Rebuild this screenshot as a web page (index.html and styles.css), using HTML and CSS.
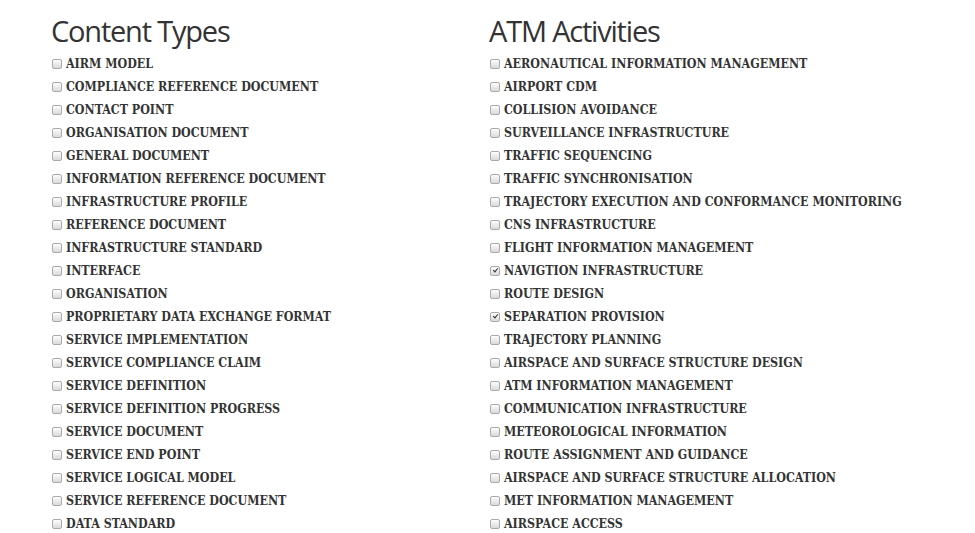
FILE: index.html
```html
<!DOCTYPE html>
<html>
<head>
<meta charset="utf-8">
<link rel="stylesheet" href="styles.css">
</head>
<body>
<div class="page">
  <section class="col">
    <h2 class="title">Content Types</h2>
    <ul class="list">
      <li><span class="cb"></span>AIRM MODEL</li>
      <li><span class="cb"></span>COMPLIANCE REFERENCE DOCUMENT</li>
      <li><span class="cb"></span>CONTACT POINT</li>
      <li><span class="cb"></span>ORGANISATION DOCUMENT</li>
      <li><span class="cb"></span>GENERAL DOCUMENT</li>
      <li><span class="cb"></span>INFORMATION REFERENCE DOCUMENT</li>
      <li><span class="cb"></span>INFRASTRUCTURE PROFILE</li>
      <li><span class="cb"></span>REFERENCE DOCUMENT</li>
      <li><span class="cb"></span>INFRASTRUCTURE STANDARD</li>
      <li><span class="cb"></span>INTERFACE</li>
      <li><span class="cb"></span>ORGANISATION</li>
      <li><span class="cb"></span>PROPRIETARY DATA EXCHANGE FORMAT</li>
      <li><span class="cb"></span>SERVICE IMPLEMENTATION</li>
      <li><span class="cb"></span>SERVICE COMPLIANCE CLAIM</li>
      <li><span class="cb"></span>SERVICE DEFINITION</li>
      <li><span class="cb"></span>SERVICE DEFINITION PROGRESS</li>
      <li><span class="cb"></span>SERVICE DOCUMENT</li>
      <li><span class="cb"></span>SERVICE END POINT</li>
      <li><span class="cb"></span>SERVICE LOGICAL MODEL</li>
      <li><span class="cb"></span>SERVICE REFERENCE DOCUMENT</li>
      <li><span class="cb"></span>DATA STANDARD</li>
    </ul>
  </section>
  <section class="col">
    <h2 class="title">ATM Activities</h2>
    <ul class="list">
      <li><span class="cb"></span>AERONAUTICAL INFORMATION MANAGEMENT</li>
      <li><span class="cb"></span>AIRPORT CDM</li>
      <li><span class="cb"></span>COLLISION AVOIDANCE</li>
      <li><span class="cb"></span>SURVEILLANCE INFRASTRUCTURE</li>
      <li><span class="cb"></span>TRAFFIC SEQUENCING</li>
      <li><span class="cb"></span>TRAFFIC SYNCHRONISATION</li>
      <li><span class="cb"></span>TRAJECTORY EXECUTION AND CONFORMANCE MONITORING</li>
      <li><span class="cb"></span>CNS INFRASTRUCTURE</li>
      <li><span class="cb"></span>FLIGHT INFORMATION MANAGEMENT</li>
      <li><span class="cb checked"></span>NAVIGTION INFRASTRUCTURE</li>
      <li><span class="cb"></span>ROUTE DESIGN</li>
      <li><span class="cb checked"></span>SEPARATION PROVISION</li>
      <li><span class="cb"></span>TRAJECTORY PLANNING</li>
      <li><span class="cb"></span>AIRSPACE AND SURFACE STRUCTURE DESIGN</li>
      <li><span class="cb"></span>ATM INFORMATION MANAGEMENT</li>
      <li><span class="cb"></span>COMMUNICATION INFRASTRUCTURE</li>
      <li><span class="cb"></span>METEOROLOGICAL INFORMATION</li>
      <li><span class="cb"></span>ROUTE ASSIGNMENT AND GUIDANCE</li>
      <li><span class="cb"></span>AIRSPACE AND SURFACE STRUCTURE ALLOCATION</li>
      <li><span class="cb"></span>MET INFORMATION MANAGEMENT</li>
      <li><span class="cb"></span>AIRSPACE ACCESS</li>
    </ul>
  </section>
</div>
</body>
</html>
```
FILE: styles.css
```css
html, body {
  margin: 0;
  padding: 0;
  background: #fff;
  color: #333;
}
.page {
  display: grid;
  grid-template-columns: 438px 438px;
  padding: 13px 0 0 52px;
}
.title {
  font-family: "Open Sans", sans-serif;
  font-weight: 400;
  font-size: 29px;
  letter-spacing: -1.2px;
  line-height: 36px;
  margin: 0 0 3px -1px;
  color: #333;
}
.list {
  list-style: none;
  margin: 0;
  padding: 0;
}
.list li {
  display: flex;
  align-items: center;
  height: 23px;
  font-family: "DejaVu Serif Condensed", "DejaVu Serif", serif;
  font-weight: 700;
  font-size: 12.35px;
  color: #333;
  white-space: nowrap;
}
.cb {
  position: relative;
  width: 8px;
  height: 8px;
  border: 1px solid #aaa;
  border-radius: 2px;
  background: linear-gradient(#fdfdfd, #dadada);
  margin-right: 4px;
  flex: none;
}
.cb.checked::after {
  content: "";
  position: absolute;
  left: 2.5px;
  top: 0.5px;
  width: 2px;
  height: 4px;
  border: solid #333;
  border-width: 0 1.6px 1.6px 0;
  transform: rotate(40deg);
}
```
